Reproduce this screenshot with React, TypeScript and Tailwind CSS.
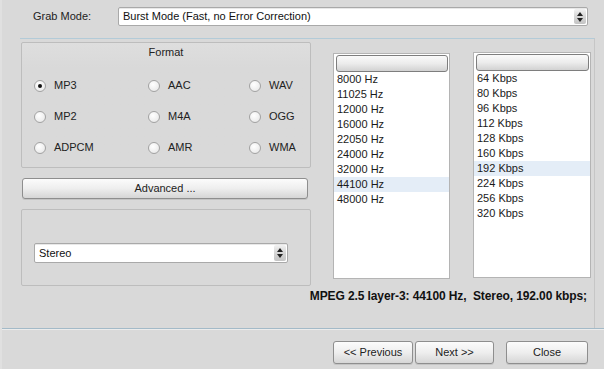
import React from "react";

const font = { fontFamily: '"Liberation Sans", Arial, sans-serif' };

function Spinner() {
  return (
    <div className="flex h-full w-[12px] flex-col items-center justify-center gap-[2px] rounded-[2px] bg-gradient-to-b from-[#f2f2f2] via-[#d6d6d6] to-[#c4c4c4]">
      <svg width="6" height="4" viewBox="0 0 6 4">
        <path d="M3 0 L6 4 L0 4 Z" fill="#222" />
      </svg>
      <svg width="6" height="4" viewBox="0 0 6 4">
        <path d="M0 0 L6 0 L3 4 Z" fill="#222" />
      </svg>
    </div>
  );
}

function Select({ value, className }: { value: string; className: string }) {
  return (
    <div
      className={`flex items-center justify-between rounded-[2px] border border-[#a9a9a9] bg-white pl-[4px] pr-[1px] py-[1px] shadow-[inset_0_1px_0_#e8e8e8] ${className}`}
    >
      <span className="text-[11px] leading-none text-[#111]">{value}</span>
      <Spinner />
    </div>
  );
}

function Radio({ label, checked }: { label: string; checked?: boolean }) {
  return (
    <div className="flex items-center gap-[8px]">
      <div className="flex h-[12px] w-[12px] items-center justify-center rounded-full border border-[#a2a2a2] bg-[radial-gradient(circle_at_40%_35%,#ffffff,#e4e4e4)]">
        {checked && <div className="h-[4px] w-[4px] rounded-full bg-[#111]" />}
      </div>
      <span className="text-[11px] leading-none text-[#222]">{label}</span>
    </div>
  );
}

function Button({ label, className }: { label: string; className: string }) {
  return (
    <div
      className={`flex items-center justify-center rounded-[3px] border border-[#8e8e8e] bg-gradient-to-b from-[#fcfcfc] via-[#eeeeee] to-[#d6d6d6] text-[11px] text-[#222] shadow-[0_1px_0_#c4c4c4] ${className}`}
    >
      {label}
    </div>
  );
}

function ListBox({
  items,
  selected,
  className,
}: {
  items: string[];
  selected: string;
  className: string;
}) {
  return (
    <div className={`flex shrink-0 flex-col border border-[#b4b4b4] bg-white ${className}`}>
      <div className="ml-[2px] mr-[1px] mt-[1px] h-[17px] rounded-[3px] border border-[#7e7e7e] bg-gradient-to-b from-[#fafafa] via-[#ececec] to-[#d2d2d2]" />
      <div className="flex flex-col">
        {items.map((it) => (
          <div
            key={it}
            className={`h-[15px] pl-[3px] text-[11px] leading-[15px] text-[#1a1a1a] ${
              it === selected ? "bg-[#e4edf7]" : ""
            }`}
          >
            {it}
          </div>
        ))}
      </div>
    </div>
  );
}

export default function App() {
  const rates = ["8000 Hz", "11025 Hz", "12000 Hz", "16000 Hz", "22050 Hz", "24000 Hz", "32000 Hz", "44100 Hz", "48000 Hz"];
  const bitrates = ["64 Kbps", "80 Kbps", "96 Kbps", "112 Kbps", "128 Kbps", "160 Kbps", "192 Kbps", "224 Kbps", "256 Kbps", "320 Kbps"];

  return (
    <div style={font} className="flex h-[369px] w-[604px] flex-col overflow-hidden border-l-2 border-l-[#e0e0e0] bg-[#d9d9d9]">
      {/* grab mode */}
      <div className="flex h-[38px] items-start pt-[7px]">
        <div className="w-[116px] pl-[31px] text-[11px] leading-[19px] text-[#222]">Grab Mode:</div>
        <Select value="Burst Mode (Fast, no Error Correction)" className="h-[19px] w-[470px]" />
      </div>

      {/* main panel */}
      <div className="ml-[18px] flex h-[290px] w-[575px] border-r border-t border-r-[#c6c6c6] border-t-[#b3cbd8]">
        <div className="ml-[1px] flex w-[290px] shrink-0 flex-col pt-[3px]">
          <div className="flex h-[126px] flex-col rounded-[2px] border border-[#bdbdbd] bg-gradient-to-b from-[#dedede] to-[#d9d9d9] to-[20%]">
            <div className="mt-[3px] text-center text-[11px] leading-[13px] text-[#222]">Format</div>
            <div className="mt-[16px] grid grid-cols-[114px_101px_auto] gap-y-[10px] pl-[12px]">
              {[
                ["MP3", "AAC", "WAV"],
                ["MP2", "M4A", "OGG"],
                ["ADPCM", "AMR", "WMA"],
              ].flat().map((l) => (
                <div key={l} className="flex h-[21px] items-center">
                  <Radio label={l} checked={l === "MP3"} />
                </div>
              ))}
            </div>
          </div>
          <Button label="Advanced ..." className="ml-[1px] mt-[10px] h-[21px] w-[286px]" />
          <div className="mt-[10px] h-[77px] rounded-[2px] border border-[#bdbdbd] pl-[12px] pt-[33px]">
            <Select value="Stereo" className="h-[20px] w-[254px]" />
          </div>
        </div>

        <div className="flex w-[283px] min-w-0 shrink-0 flex-col">
          <div className="flex items-start gap-[23px] pl-[22px]">
            <ListBox items={rates} selected="44100 Hz" className="mt-[14px] h-[226px] w-[117px]" />
            <ListBox items={bitrates} selected="192 Kbps" className="mt-[13px] h-[226px] w-[118px]" />
          </div>
          <div className="mt-[10px] flex justify-end pr-[7px]">
            <span className="whitespace-pre text-[12px] font-bold leading-[14px] tracking-[-0.1px] text-[#111]">
              {"MPEG 2.5 layer-3: 44100 Hz,  Stereo, 192.00 kbps;"}
            </span>
          </div>
        </div>
      </div>

      {/* footer */}
      <div className="flex flex-1 items-start border-t border-t-[#a3bac8] pt-[12px] shadow-[inset_0_1px_0_#ececec]">
        <div className="ml-[331px] flex gap-[2px]">
          <Button label="<< Previous" className="h-[23px] w-[80px]" />
          <Button label="Next >>" className="h-[23px] w-[79px]" />
        </div>
        <Button label="Close" className="ml-[12px] h-[23px] w-[82px]" />
      </div>
    </div>
  );
}
